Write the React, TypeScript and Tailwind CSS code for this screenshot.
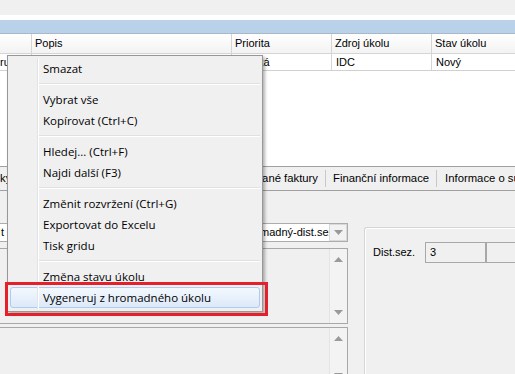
import { ReactNode } from "react";

const ui = "font-['Liberation_Sans',Arial,sans-serif] text-[11px] text-black";

function ScrollArrow({ up }: { up?: boolean }) {
  return (
    <svg width="9" height="5" viewBox="0 0 9 5">
      <polygon points={up ? "0,5 9,5 4.5,0" : "0,0 9,0 4.5,5"} fill="#9a9a9a" />
    </svg>
  );
}

function MemoBox({ className, children }: { className: string; children?: ReactNode }) {
  return (
    <div className={`flex border border-[#a8a8a8] bg-[#f0f0f0] ${className}`}>
      <div className="flex-1">{children}</div>
      <div className="w-[18px] flex flex-col justify-between items-center py-[8px] bg-[#f3f3f3] border-l border-[#e4e4e4]">
        <ScrollArrow up />
        <ScrollArrow />
      </div>
    </div>
  );
}

function MenuItem({ label, active }: { label: string; active?: boolean }) {
  return (
    <div
      className={`h-[21px] flex items-center mx-[2px] pl-[32px] rounded-[3px] border ${
        active
          ? "border-[#aecbf0] bg-[linear-gradient(#f3f8fe,#dde9f9)]"
          : "border-transparent"
      }`}
    >
      {label}
    </div>
  );
}

function Separator() {
  return (
    <div className="h-[10px] flex flex-col justify-center pl-[30px] pr-[2px]">
      <div className="h-px bg-[#e0e0e0]" />
      <div className="h-px bg-white" />
    </div>
  );
}

export default function App() {
  return (
    <div className={`relative w-[515px] h-[374px] overflow-hidden bg-[#f0f0f0] ${ui}`}>
      <div className="h-[15px]" />
      <div className="h-[5px] bg-white" />
      <div className="h-[14px] bg-[#bad1ea] border-b border-[#a9b8c8]" />

      {/* grid */}
      <div className="h-[132px] bg-white">
        <div className="h-[20px] flex border-b border-[#d5d5d5] bg-[linear-gradient(#ffffff,#f3f3f3)]">
          <div className="w-[32px] shrink-0 border-r border-[#d5d5d5]" />
          <div className="w-[200px] shrink-0 pl-[3px] flex items-center border-r border-[#d5d5d5]">Popis</div>
          <div className="w-[100px] shrink-0 pl-[3px] flex items-center border-r border-[#d5d5d5]">Priorita</div>
          <div className="w-[100px] shrink-0 pl-[3px] flex items-center border-r border-[#d5d5d5]">Zdroj úkolu</div>
          <div className="flex-1 pl-[3px] flex items-center">Stav úkolu</div>
        </div>
        <div className="h-[17px] flex border-b border-[#d0d0d0]">
          <div className="w-[32px] shrink-0 border-r border-[#d5d5d5] flex items-center">ru</div>
          <div className="w-[200px] shrink-0 border-r border-[#d5d5d5]" />
          <div className="w-[100px] shrink-0 pl-[2px] flex items-center border-r border-[#d5d5d5]">Vysoká</div>
          <div className="w-[100px] shrink-0 pl-[4px] flex items-center border-r border-[#d5d5d5]">IDC</div>
          <div className="flex-1 pl-[4px] flex items-center">Nový</div>
        </div>
      </div>

      {/* tab strip */}
      <div className="h-[25px] flex items-center border-t border-b border-[#a0a0a0] whitespace-nowrap text-[11.3px]">
        <div className="w-[40px] shrink-0">ky</div>
        <div className="w-[286px] shrink-0 flex justify-end pr-[7px] border-r border-[#c8c8c8] h-[17px] items-center">Navázané faktury</div>
        <div className="shrink-0 px-[7px] border-r border-[#c8c8c8] h-[17px] flex items-center">Finanční informace</div>
        <div className="shrink-0 pl-[8px]">Informace o subjektu</div>
      </div>

      {/* lower panel */}
      <div className="flex">
        <div className="w-[350px] shrink-0 -ml-[2px] flex flex-col pt-[32px]">
          <div className="h-[19px] flex border border-[#acacac] bg-white">
            <div className="flex-1 overflow-hidden whitespace-nowrap flex items-center pl-[2px]">
              <span>t</span>
              <span className="ml-[256px]">madný-dist.sez</span>
            </div>
            <div className="w-[18px] flex items-center justify-center border border-[#d9d9d9] bg-[#f2f2f2]">
              <ScrollArrow />
            </div>
          </div>
          <MemoBox className="h-[76px] mt-[6px]" />
          <MemoBox className="h-[60px] mt-[3px]" />
        </div>

        <div className="flex-1 ml-[16px] mt-[36px] rounded-tl-[3px] border-l border-t border-[#d5d5d5] shadow-[inset_1px_1px_0_#ffffff] pl-[8px] pt-[14px]">
          <div className="flex items-center">
            <div className="w-[52px]">Dist.sez.</div>
            <div className="w-[61px] h-[21px] border border-[#a8a8a8] flex items-center pl-[4px]">3</div>
            <div className="flex-1 h-[21px] border-y border-l border-[#a8a8a8]" />
          </div>
        </div>
      </div>

      {/* context menu */}
      <div className="absolute left-[7px] top-[55px] w-[256px] border border-[#979797] bg-[#f0f0f0] pt-[2px] pb-[3px] shadow-[2px_2px_3px_rgba(0,0,0,0.3)] font-['Open_Sans',sans-serif] text-[11.5px]">
        <div className="absolute left-[29px] top-[2px] bottom-[2px] w-px bg-[#e2e3e3]" />
        <div className="absolute left-[30px] top-[2px] bottom-[2px] w-px bg-white" />
        <MenuItem label="Smazat" />
        <Separator />
        <MenuItem label="Vybrat vše" />
        <MenuItem label="Kopírovat (Ctrl+C)" />
        <Separator />
        <MenuItem label="Hledej... (Ctrl+F)" />
        <MenuItem label="Najdi další (F3)" />
        <Separator />
        <MenuItem label="Změnit rozvržení (Ctrl+G)" />
        <MenuItem label="Exportovat do Excelu" />
        <MenuItem label="Tisk gridu" />
        <Separator />
        <MenuItem label="Změna stavu úkolu" />
        <MenuItem label="Vygeneruj z hromadného úkolu" active />
      </div>

      {/* highlight frame */}
      <div className="absolute left-[5px] top-[282px] w-[263px] h-[34px] border-[3px] border-[#e6202a]" />
    </div>
  );
}
